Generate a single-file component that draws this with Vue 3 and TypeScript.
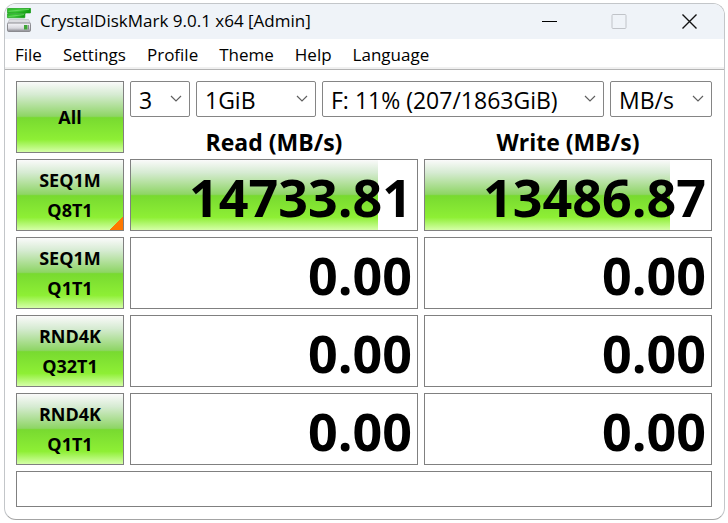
<script setup lang="ts">
import { ref } from 'vue'

interface Test {
  name: string
  queue: string
  read: number
  write: number
  readFill: number
  writeFill: number
  mixed?: boolean
}

const menus = ['File', 'Settings', 'Profile', 'Theme', 'Help', 'Language']

const selectors = ref([
  { id: 'count', label: 'Test count', value: '3' },
  { id: 'size', label: 'Test size', value: '1GiB' },
  { id: 'drive', label: 'Target drive', value: 'F: 11% (207/1863GiB)' },
  { id: 'unit', label: 'Unit', value: 'MB/s' },
])

const tests: Test[] = [
  { name: 'SEQ1M', queue: 'Q8T1', read: 14733.81, write: 13486.87, readFill: 86.4, writeFill: 85.8, mixed: true },
  { name: 'SEQ1M', queue: 'Q1T1', read: 0, write: 0, readFill: 0, writeFill: 0 },
  { name: 'RND4K', queue: 'Q32T1', read: 0, write: 0, readFill: 0, writeFill: 0 },
  { name: 'RND4K', queue: 'Q1T1', read: 0, write: 0, readFill: 0, writeFill: 0 },
]

const bar = (percent: number) => ({ backgroundSize: `${percent}% 100%` })
</script>

<template>
  <div class="window">
    <header class="titlebar">
      <svg class="logo" viewBox="0 0 24 24" aria-hidden="true">
        <defs>
          <linearGradient id="platter" x1="0" x2="1" y1="0" y2="0.200">
            <stop offset="0" stop-color="#2fb82a" />
            <stop offset="0.5" stop-color="#3cc936" />
            <stop offset="1" stop-color="#12a012" />
          </linearGradient>
          <linearGradient id="body" x1="0" x2="0" y1="0" y2="1">
            <stop offset="0" stop-color="#f6f6fa" />
            <stop offset="0.6" stop-color="#d8d8de" />
            <stop offset="1" stop-color="#85858b" />
          </linearGradient>
        </defs>
        <path d="M2.500 11.500h19l2 4H.5z" fill="#dcdde1" stroke="#b9bac0" stroke-width="0.600" />
        <rect x="0.500" y="15" width="23" height="8.500" rx="1.200" fill="url(#body)" stroke="#8b8b90" />
        <rect x="0.300" y="0.300" width="23.400" height="4.700" rx="0.600" fill="url(#platter)" stroke="#129512" stroke-width="0.600" />
        <path d="M17 5.300h2" stroke="#2fb82a" stroke-width="0.800" />
        <rect x="0.300" y="5.600" width="17.600" height="4.200" rx="0.600" fill="url(#platter)" stroke="#129512" stroke-width="0.600" />
        <path d="M1.500 3.300L22 1.300M1.500 8.500L17 6.600" stroke="#7be073" stroke-width="0.700" />
        <rect x="17" y="17" width="3.500" height="4.500" fill="#3fa535" />
        <path d="M21.500 17v4.500" stroke="#6d6d72" stroke-width="0.700" />
      </svg>
      <h1 class="title">CrystalDiskMark 9.0.1 x64 [Admin]</h1>
      <button class="caption" type="button" aria-label="Minimize">
        <svg viewBox="0 0 16 16"><path d="M1 7.500h15" stroke="#000" fill="none" /></svg>
      </button>
      <button class="caption" type="button" aria-label="Maximize" disabled>
        <svg viewBox="0 0 16 16"><rect x="1" y="0.500" width="14" height="14" rx="1" stroke="#c0c3c8" fill="none" /></svg>
      </button>
      <button class="caption" type="button" aria-label="Close">
        <svg viewBox="0 0 16 16"><path d="M1.500 0.500l14 14M15.500 0.500l-14 14" stroke="#111" stroke-width="1.400" fill="none" /></svg>
      </button>
    </header>

    <nav class="menubar">
      <button v-for="menu in menus" :key="menu" class="menu" type="button">{{ menu }}</button>
    </nav>

    <main class="content">
      <table class="results">
        <colgroup>
          <col class="tests" />
          <col />
          <col />
        </colgroup>
        <thead>
          <tr class="tools">
            <td rowspan="2"><button class="run" type="button">All</button></td>
            <td colspan="2">
              <div class="selectors">
                <label v-for="item in selectors" :key="item.id" class="picker" :class="item.id">
                  <select v-model="item.value" :aria-label="item.label">
                    <option>{{ item.value }}</option>
                  </select>
                  <svg class="chevron" viewBox="0 0 12 8" aria-hidden="true">
                    <path d="M1 1l5 5 5-5" fill="none" stroke="#606060" stroke-width="1.200" />
                  </svg>
                </label>
              </div>
            </td>
          </tr>
          <tr class="headings">
            <th scope="col">Read (MB/s)</th>
            <th scope="col">Write (MB/s)</th>
          </tr>
        </thead>
        <tbody>
          <tr v-for="test in tests" :key="test.name + test.queue">
            <td>
              <button class="run" :class="{ mixed: test.mixed }" type="button">
                {{ test.name }}<br />{{ test.queue }}
              </button>
            </td>
            <td class="score" :style="bar(test.readFill)">{{ test.read.toFixed(2) }}</td>
            <td class="score" :style="bar(test.writeFill)">{{ test.write.toFixed(2) }}</td>
          </tr>
        </tbody>
      </table>
      <input class="comment" type="text" aria-label="Comment" />
    </main>
  </div>
</template>

<style>
body {
  background: #fff;
}
</style>

<style scoped>
.window {
  --green: linear-gradient(#fafafa 0%, #d6ebd2 18%, #8ed565 49%, #78da30 51%, #8eef35 82%, #d5ffa8 100%);
  box-sizing: border-box;
  margin: 3px 3px 3px 4px;
  border: 1px solid #c3c6c9;
  border-bottom-color: #a4a4a4;
  border-radius: 12px;
  overflow: hidden;
  background: #fff;
  color: #000;
  font-family: "Open Sans", "Noto Sans", sans-serif;
}

button,
select,
input {
  box-sizing: border-box;
  margin: 0;
  padding: 0;
  border: 0;
  background: none;
  color: inherit;
  font: inherit;
}

.titlebar {
  display: flex;
  align-items: center;
  height: 35px;
  padding: 0 0 0 2px;
  background: #eff3f8;
}

.logo {
  width: 24px;
  height: 24px;
  margin-bottom: 3px;
}

.title {
  flex: 1;
  margin: 0 0 2px 9px;
  font-size: 17px;
  font-weight: 400;
  white-space: nowrap;
}

.caption {
  display: grid;
  place-items: center;
  width: 70px;
  height: 35px;
}

.caption svg {
  width: 16px;
  height: 16px;
}

.menubar {
  display: flex;
  gap: 21px;
  height: 30px;
  padding: 0 10px;
  border-bottom: 1px solid #b4b4b4;
  box-shadow: inset 0 -2px #f0f0f0;
  font-size: 17px;
}

.menu {
  padding-top: 2px;
  line-height: 28px;
}

.content {
  padding: 5px 6px 12px 5px;
}

.results {
  width: 100%;
  table-layout: fixed;
  border-spacing: 6px;
}

.tests {
  width: 108px;
}

.results td,
.results th {
  box-sizing: border-box;
  padding: 0;
}

.tools {
  height: 36px;
}

.headings {
  height: 30px;
}

.results .headings th {
  padding-top: 8px;
  font-size: 23px;
  line-height: 22px;
}

.run {
  display: block;
  width: 100%;
  height: 72px;
  border: 1px solid #808080;
  background: var(--green);
  font-size: 18px;
  font-weight: 700;
  line-height: 30px;
}

.mixed {
  background:
    linear-gradient(135deg, transparent 50%, #ff7800 50%) right bottom / 14px 14px no-repeat,
    var(--green);
}

.selectors {
  display: flex;
  gap: 6px;
}

.picker {
  display: grid;
  align-items: center;
  height: 36px;
}

.picker select,
.chevron {
  grid-area: 1 / 1;
}

.picker select {
  width: 100%;
  height: 36px;
  padding: 2px 0 0 8px;
  border: 1px solid #858585;
  border-radius: 2px;
  appearance: none;
  font-size: 23px;
}

.chevron {
  justify-self: end;
  width: 12px;
  height: 8px;
  margin-right: 8px;
  pointer-events: none;
}

.count {
  width: 60px;
}

.size {
  width: 120px;
}

.drive {
  flex: 1;
}

.unit {
  width: 102px;
}

.results .score {
  height: 72px;
  padding: 4px 5px 0 0;
  border: 1px solid #808080;
  background-image: var(--green);
  background-repeat: no-repeat;
  font-size: 52px;
  font-weight: 700;
  line-height: 64px;
  text-align: right;
}

.comment {
  display: block;
  width: calc(100% - 12px);
  height: 36px;
  margin: 0 6px;
  padding: 0 8px;
  border: 1px solid #808080;
  font-size: 18px;
}
</style>
